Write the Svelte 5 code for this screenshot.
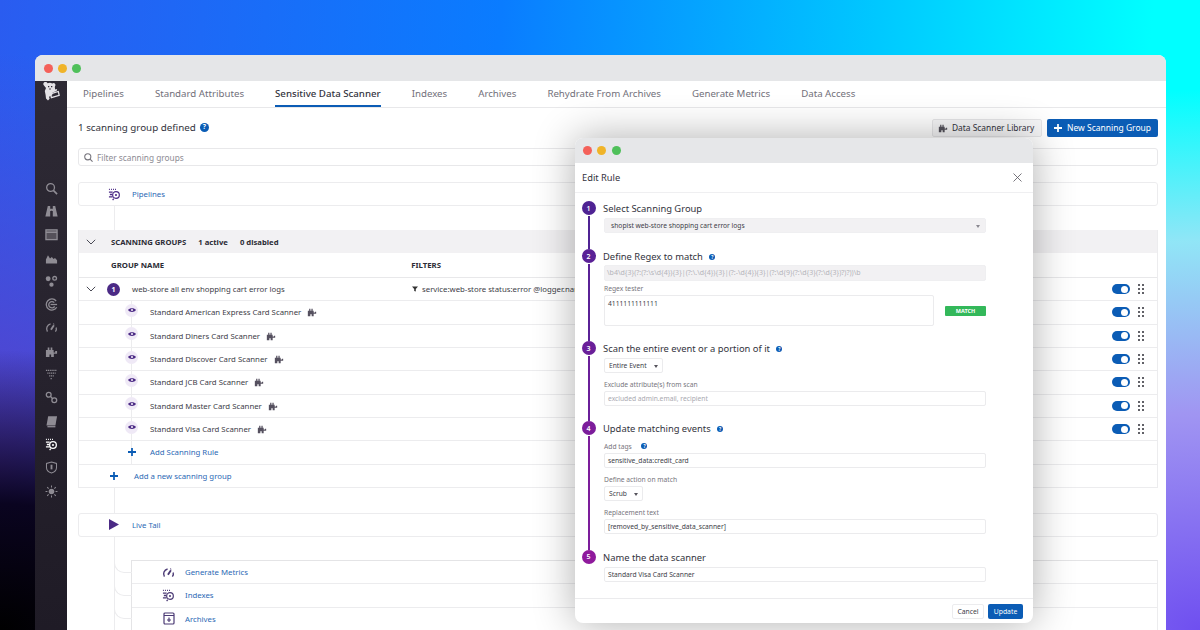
<script>
  const tabs = ['Pipelines','Standard Attributes','Sensitive Data Scanner','Indexes','Archives','Rehydrate From Archives','Generate Metrics','Data Access'];
  const rules = ['Standard American Express Card Scanner','Standard Diners Card Scanner','Standard Discover Card Scanner','Standard JCB Card Scanner','Standard Master Card Scanner','Standard Visa Card Scanner'];
  const side = ['search','binoc','cal','chart','dots','target','gauge','puzzle','filter','link','book','scan','shield','sun'];
</script>

{#snippet puzzle(size, color)}
  <svg width={size} height={size} viewBox="0 0 12 12" fill={color}><path d="M1 11V4.500h1.600V2h1.500v2.500h1.200V2h1.500v2.500H8v2.200h1.600V5.600H11v2.500H8V11H5.600V8.600H4V11z"/></svg>
{/snippet}
{#snippet scan(size, color)}
  <svg width={size} height={size} viewBox="0 0 14 14" fill="none" stroke={color} stroke-width="1.300"><path d="M1 1.500h1M3.200 1.500h1M5.400 1.500h1M7.600 1.500h1M1 4.500h4M2 7h2.400M1 9.500h4" stroke-width="1.400"/><circle cx="8.600" cy="7.600" r="3.600"/><circle cx="8.600" cy="7.600" r="1.100" fill={color} stroke="none"/><path d="M6.200 11.500l-1.200 1.600"/></svg>
{/snippet}
{#snippet gauge(size, color)}
  <svg width={size} height={size} viewBox="0 0 14 14" fill="none" stroke={color} stroke-width="1.500"><path d="M2.600 11.500A5.500 5.500 0 0 1 6 3.200M9 3.400l.9-.4M12 7a5 5 0 0 1-.8 4.500"/><path d="M6.400 9.400L9.600 4.600" stroke-width="2"/></svg>
{/snippet}
{#snippet sideIcon(n)}
  <svg width="13" height="13" viewBox="0 0 14 14" fill="none" stroke="#8f8c94" stroke-width="1.400">
    {#if n==='search'}<circle cx="6" cy="6" r="4.200"/><path d="M9 9l4 4" stroke-width="1.800"/>
    {:else if n==='binoc'}<path fill="#8f8c94" stroke="none" d="M3 1h2.600v3h2.800V1H11l2.600 11.500H8.400V6.500H7.500v-.2h-1v.2h-.9v6H.4z"/>
    {:else if n==='cal'}<rect x="1" y="2" width="12" height="10.500" fill="#55515a" stroke="#8f8c94"/><path d="M1 4.600h12"/>
    {:else if n==='chart'}<path fill="#8f8c94" stroke="none" d="M1 12.500V8l2.200-4.500L5.400 7l2-1.500 1.800 2 1.600-1L13 9v3.500z"/>
    {:else if n==='dots'}<circle cx="3.400" cy="4" r="2.600" fill="#8f8c94" stroke="none"/><circle cx="10.400" cy="3.600" r="2" /><circle cx="7" cy="10.400" r="2.300" fill="#8f8c94" stroke="none"/>
    {:else if n==='target'}<path d="M12 3.200A6 6 0 1 0 12.600 10M10 5A3.400 3.400 0 1 0 10.400 9"/><path d="M6 7h7"/>
    {:else if n==='gauge'}<path d="M2.600 11.500A5.500 5.500 0 0 1 6 3.200M9 3.400l.9-.4M12 7a5 5 0 0 1-.8 4.500"/><path d="M6.400 9.400L9.600 4.600" stroke-width="2"/>
    {:else if n==='puzzle'}<path fill="#8f8c94" stroke="none" d="M1 13V5.300h1.900V2.800h1.800v2.500h1.400V2.800h1.800v2.500h1.400V8h1.700V6.500H13v3H9.500V13H6.600v-2.800H4.800V13z"/>
    {:else if n==='filter'}<path stroke-dasharray="1.300 .7" d="M1 2.500h12M2.500 5.500h9M4.500 8.500h5M6 11.500h2"/>
    {:else if n==='link'}<circle cx="4" cy="4" r="2.600"/><circle cx="10" cy="10" r="2.600"/><path d="M6 6l2 2"/>
    {:else if n==='book'}<path fill="#8f8c94" stroke="none" d="M3.400 1.400H13l-1.800 10H1.600z"/><path d="M2.600 12.600h8.600" />
    {:else if n==='scan'}<path stroke="#fff" d="M1 1.500h1M3.200 1.500h1M5.400 1.500h1M7.600 1.500h1M1 4.500h4M2 7h2.400M1 9.500h4"/><circle stroke="#fff" cx="8.600" cy="7.600" r="3.600"/><circle cx="8.600" cy="7.600" r="1.100" fill="#fff" stroke="none"/><path stroke="#fff" d="M6.200 11.500l-1.200 1.600"/>
    {:else if n==='shield'}<path stroke-width="1.100" d="M7 1l5.400 1.600V7c0 3-2.400 5-5.400 6C4 12 1.600 10 1.600 7V2.600z"/><path d="M7 4v5" stroke-width="2"/>
    {:else}<circle cx="7" cy="7" r="3" fill="#8f8c94" stroke="none"/><path stroke-width="1.100" d="M7 .6v2M7 11.400v2M.6 7h2M11.400 7h2M2.400 2.400l1.500 1.500M10.100 10.100l1.500 1.500M11.600 2.400l-1.500 1.500M3.900 10.100l-1.500 1.500"/>{/if}
  </svg>
{/snippet}
{#snippet help(size)}
  <span class="help" style="--s:{size}px">?</span>
{/snippet}
{#snippet plus(size)}
  <svg width={size} height={size} viewBox="0 0 10 10" fill="#0b5cb5"><path d="M3.900 0h2.200v3.900H10v2.200H6.100V10H3.900V6.100H0V3.900h3.900z"/></svg>
{/snippet}
{#snippet chev()}
  <svg width="10" height="6" viewBox="0 0 10 6" fill="none" stroke="#4a4a55" stroke-width="1"><path d="M.8.8L5 5l4.200-4.200"/></svg>
{/snippet}
{#snippet toggle()}
  <span class="toggle"><i></i></span>
  <svg class="grip" width="6" height="10" viewBox="0 0 6 10" fill="#2c2c35"><circle cx="1" cy="1" r="1"/><circle cx="5" cy="1" r="1"/><circle cx="1" cy="5" r="1"/><circle cx="5" cy="5" r="1"/><circle cx="1" cy="9" r="1"/><circle cx="5" cy="9" r="1"/></svg>
{/snippet}

<div class="page">
  <div class="window">
    <div class="chrome">
      <i class="dot red"></i><i class="dot yellow"></i><i class="dot green"></i>
    </div>
    <div class="shell">
      <nav class="sidebar">
        <svg class="logo" width="17" height="19" viewBox="0 0 17 19"><path fill="#e4e2e6" d="M2.500 0a2 2 0 0 1 2 1.200L7 .8l2.500.6A2 2 0 0 1 12.500 3l-.7 2 .4 2.400 2-.4-.6 2-4 1.600-.4 2.600-3.200 1.600.6 2L5 18.500 3 16.500l-.4-3.500L1.800 9 3 6 1 3.500A2 2 0 0 1 2.500 0z"/><path fill="none" stroke="#e4e2e6" stroke-width="1.300" d="M7.500 11.800l7.800-2.300.9 3.800-7.800 2.300z"/><path fill="#2c2733" d="M5 4h1.300v1.300H5zM8 4h1.300v1.300H8zM6.200 6.500h1.600v1H6.200z"/></svg>
        <div class="side-icons">
          {#each side as n}
            <span class="side-item">{@render sideIcon(n)}</span>
          {/each}
        </div>
      </nav>
      <main class="main">
        <div class="tabs">
          {#each tabs as t, i}
            <span class="tab" class:active={i===2}>{t}</span>
          {/each}
        </div>
        <div class="content">
          <div class="head">
            <span class="count">1 scanning group defined</span>
            {@render help(9)}
            <span class="spacer"></span>
            <button class="btn-lib">{@render puzzle(10,'#55535c')}Data Scanner Library</button>
            <button class="btn-new"><svg width="8" height="8" viewBox="0 0 10 10" fill="#fff"><path d="M3.900 0h2.200v3.900H10v2.200H6.100V10H3.900V6.100H0V3.900h3.900z"/></svg>New Scanning Group</button>
          </div>
          <div class="filter">
            <svg width="9" height="9" viewBox="0 0 10 10" fill="none" stroke="#77757d" stroke-width="1.200"><circle cx="4.200" cy="4.200" r="3.400"/><path d="M6.700 6.700L9.500 9.500"/></svg>
            Filter scanning groups
          </div>
          <div class="node">
            <span class="node-icon">{@render scan(13,'#4b2a85')}</span>
            <span class="link-text">Pipelines</span>
          </div>
          <div class="wire h24"></div>
          <section class="groups">
            <div class="g-bar">
              <span class="g-chev">{@render chev()}</span>
              <b class="g-title">SCANNING GROUPS</b>
              <b class="g-stat">1 active</b>
              <b class="g-stat">0 disabled</b>
            </div>
            <div class="g-cols">
              <b>GROUP NAME</b><b class="col-filter">FILTERS</b>
            </div>
            <div class="row">
              <span class="g-chev">{@render chev()}</span>
              <span class="num">1</span>
              <span class="g-name">web-store all env shopping cart error logs</span>
              <span class="filter-val"><svg width="6" height="6" viewBox="0 0 6 6" fill="#333"><path d="M0 .5h6L3.800 3v2.500L2.200 5V3z"/></svg>service:web-store status:error @logger.name:shopist</span>
              <span class="spacer"></span>
              {@render toggle()}
            </div>
            {#each rules as r}
              <div class="row rule">
                <span class="eye"><svg width="8" height="6" viewBox="0 0 8 6" fill="#4b2a85"><path d="M0 3C1.500.5 6.500.5 8 3 6.500 5.500 1.500 5.500 0 3z"/><circle cx="4" cy="3" r="1.100" fill="#efe9f6"/></svg></span>
                <span class="r-name">{r}</span>
                {@render puzzle(10,'#55505f')}
                <span class="spacer"></span>
                {@render toggle()}
              </div>
            {/each}
            <div class="row rule">
              <span class="eye plain">{@render plus(8)}</span>
              <span class="link-text">Add Scanning Rule</span>
            </div>
            <div class="row add-group">
              <span class="add-plus">{@render plus(8)}</span>
              <span class="link-text">Add a new scanning group</span>
            </div>
          </section>
          <div class="wire h25"></div>
          <div class="node">
            <span class="node-icon"><svg width="10" height="11" viewBox="0 0 10 11" fill="#4b2a85"><path d="M0 0l10 5.500L0 11z"/></svg></span>
            <span class="link-text">Live Tail</span>
          </div>
          <div class="wire h23"></div>
          <div class="sub-wrap">
            <div class="sub">
              <span class="curve c1"></span><span class="curve c2"></span><span class="curve c3"></span>
              <div class="sub-row"><span class="sub-icon">{@render gauge(13,'#4b3a75')}</span><span class="link-text">Generate Metrics</span></div>
              <div class="sub-row"><span class="sub-icon">{@render scan(13,'#4b3a75')}</span><span class="link-text">Indexes</span></div>
              <div class="sub-row"><span class="sub-icon"><svg width="12" height="13" viewBox="0 0 12 13" fill="none" stroke="#4b3a75" stroke-width="1.200"><rect x="1" y="1" width="10" height="11" rx="1"/><path d="M1 3.500h10M6 5.500v4.500M4 8h4"/></svg></span><span class="link-text">Archives</span></div>
            </div>
          </div>
        </div>
      </main>
    </div>
  </div>

  <div class="modal">
    <div class="chrome m-chrome">
      <i class="dot red"></i><i class="dot yellow"></i><i class="dot green"></i>
    </div>
    <div class="m-head">
      <span>Edit Rule</span>
      <svg width="9" height="9" viewBox="0 0 9 9" stroke="#55535c" stroke-width=".8"><path d="M.5.5l8 8M8.500.5l-8 8"/></svg>
    </div>
    <div class="m-body">
      <div class="step s1">
        <div class="rail"><span class="circle n1">1</span><span class="line l1"></span></div>
        <div class="step-main">
          <h3>Select Scanning Group</h3>
          <div class="field filled sel mt3">shopist web-store shopping cart error logs<span class="caret"></span></div>
        </div>
      </div>
      <div class="step s2">
        <div class="rail"><span class="circle n2">2</span><span class="line l2"></span></div>
        <div class="step-main">
          <h3>Define Regex to match {@render help(6)}</h3>
          <div class="field filled regex mt2">\b4\d{'{'}3{'}'}(?:(?:\s\d{'{'}4{'}'}){'{'}3{'}'}|(?:\.\d{'{'}4{'}'}){'{'}3{'}'}|(?:-\d{'{'}4{'}'}){'{'}3{'}'}|(?:\d{'{'}9{'}'}(?:\d{'{'}3{'}'}(?:\d{'{'}3{'}'})?)?))\b</div>
          <div class="lab tight">Regex tester</div>
          <div class="tester">
            <div class="area">4111111111111</div>
            <span class="match">MATCH</span>
          </div>
        </div>
      </div>
      <div class="step s3">
        <div class="rail"><span class="circle n3">3</span><span class="line l3"></span></div>
        <div class="step-main">
          <h3>Scan the entire event or a portion of it {@render help(6)}</h3>
          <div class="drop w59 mt3">Entire Event<span class="caret dark"></span></div>
          <div class="lab">Exclude attribute(s) from scan</div>
          <div class="field ph">excluded admin.email, recipient</div>
        </div>
      </div>
      <div class="step s4">
        <div class="rail"><span class="circle n4">4</span><span class="line l4"></span></div>
        <div class="step-main">
          <h3>Update matching events {@render help(6)}</h3>
          <div class="lab">Add tags <span class="lab-help">{@render help(6)}</span></div>
          <div class="field">sensitive_data:credit_card</div>
          <div class="lab">Define action on match</div>
          <div class="drop w39">Scrub<span class="caret dark"></span></div>
          <div class="lab">Replacement text</div>
          <div class="field">[removed_by_sensitive_data_scanner]</div>
        </div>
      </div>
      <div class="step s5">
        <div class="rail"><span class="circle n5">5</span></div>
        <div class="step-main">
          <h3>Name the data scanner</h3>
          <div class="field mt3">Standard Visa Card Scanner</div>
        </div>
      </div>
    </div>
    <div class="m-foot">
      <button class="cancel">Cancel</button>
      <button class="update">Update</button>
    </div>
  </div>
</div>

<style>
  :global(body) { margin: 0; }
  .page {
    position: relative;
    width: 1200px;
    height: 630px;
    overflow: hidden;
    box-sizing: border-box;
    padding: 55px 34px 0 35px;
    font-family: "Noto Sans", sans-serif;
    color: #33333d;
    background:
      radial-gradient(ellipse 420px 280px at 0 100%, #000 0%, #0a0420 45%, rgba(10,4,32,0) 100%),
      radial-gradient(ellipse 760px 540px at 100% 100%, #6f4ff0 0%, #a095f2 40%, rgba(170,225,245,.85) 72%, rgba(170,235,245,0) 100%),
      radial-gradient(ellipse 300px 420px at 0 75%, #5a3fc8 0%, rgba(90,63,200,0) 100%),
      linear-gradient(95deg, #2a5cf0 0%, #0a7cff 40%, #00c8ff 70%, #00ffff 92%);
  }
  .window {
    height: 100%;
    border-radius: 8px 8px 0 0;
    overflow: hidden;
    background: #fff;
    display: flex;
    flex-direction: column;
  }
  .chrome {
    height: 26px;
    flex: none;
    background: #e5e6e8;
    display: flex;
    align-items: center;
    gap: 5.3px;
    padding-left: 8.5px;
  }
  .dot { width: 9px; height: 9px; border-radius: 50%; display: block; }
  .red { background: #f4615a; }
  .yellow { background: #f0b429; }
  .green { background: #4fc05a; }
  .shell { flex: 1; display: flex; min-height: 0; }
  .sidebar {
    width: 32px;
    flex: none;
    background: linear-gradient(#2e2a35, #1f1b26);
    display: flex;
    flex-direction: column;
    align-items: center;
  }
  .logo { margin-top: 1px; }
  .side-icons { margin-top: 75.5px; display: flex; flex-direction: column; }
  .side-item { height: 23.3px; display: flex; align-items: center; justify-content: center; }
  .main { flex: 1; min-width: 0; display: flex; flex-direction: column; }
  .tabs {
    height: 26px;
    flex: none;
    border-bottom: 1px solid #e8e8ea;
    display: flex;
    gap: 31px;
    padding-left: 16px;
  }
  .tab {
    font-size: 9.7px;
    line-height: 26px;
    color: #72707a;
    white-space: nowrap;
  }
  .tab.active {
    color: #33333d;
    font-weight: 500;
    box-shadow: inset 0 -2px 0 #0b5cb5;
  }
  .content { padding: 0 8px 0 11px; flex: 1; min-height: 0; }
  .head { height: 39px; margin-bottom: 1px; display: flex; align-items: center; gap: 5px; }
  .head .help { margin-left: -1px; }
  .count { font-size: 9.8px; color: #33333d; }
  .spacer { flex: 1; }
  .help {
    display: inline-flex;
    align-items: center;
    justify-content: center;
    width: var(--s);
    height: var(--s);
    border-radius: 50%;
    background: #0b5cb5;
    color: #fff;
    font-size: calc(var(--s) * .75);
    font-weight: 700;
    line-height: 1;
    vertical-align: 1px;
    margin-left: 2px;
  }
  button { font-family: inherit; margin: 0; cursor: pointer; }
  .btn-lib {
    height: 18px;
    width: 110px;
    border: 1px solid #e6e6e8;
    background: #f6f6f7;
    border-radius: 2px;
    font-size: 8.4px;
    color: #33333d;
    display: flex;
    align-items: center;
    gap: 4px;
    padding: 0 0 0 5px;
    white-space: nowrap;
  }
  .btn-new {
    height: 18px;
    width: 111px;
    border: 0;
    background: #0b5cb5;
    border-radius: 2px;
    font-size: 8.5px;
    color: #fff;
    display: flex;
    align-items: center;
    gap: 5px;
    padding: 0 0 0 7px;
    white-space: nowrap;
  }
  .filter {
    height: 18px;
    border: 1px solid #e8e8ea;
    border-radius: 3px;
    box-sizing: border-box;
    display: flex;
    align-items: center;
    gap: 4px;
    padding-left: 5px;
    font-size: 8.3px;
    color: #8d8b93;
    margin-bottom: 16px;
  }
  .node {
    height: 24px;
    box-sizing: border-box;
    border: 1px solid #ececee;
    border-radius: 3px;
    display: flex;
    align-items: center;
  }
  .node-icon { width: 42px; display: flex; justify-content: center; margin-left: 14px; margin-right: -3px; flex: none; }
  .link-text { color: #2b69b5; font-size: 7.8px; white-space: nowrap; }
  .wire { margin-left: 36px; width: 1px; background: #ececee; }
  .h24 { height: 24px; }
  .h25 { height: 25px; }
  .h23 { height: 23px; }
  .groups { border: 1px solid #ececee; border-top: 0; border-bottom: 0; }
  .g-bar {
    height: 23px;
    background: #f2f1f3;
    display: flex;
    align-items: center;
    font-size: 7.7px;
    color: #2c2c35;
  }
  .g-chev { width: 10px; margin-left: 7px; display: flex; flex: none; }
  .g-title { margin-left: 15px; margin-right: 12px; }
  .g-stat { margin-right: 12px; }
  .g-cols {
    height: 25px;
    border-bottom: 1px solid #e8e8ea;
    box-sizing: border-box;
    display: flex;
    align-items: center;
    font-size: 7.8px;
    color: #2c2c35;
    padding-left: 32px;
  }
  .col-filter { margin-left: 247px; }
  .row {
    height: 23.33px;
    box-sizing: border-box;
    border-bottom: 1px solid #ececee;
    display: flex;
    align-items: center;
    font-size: 7.8px;
    color: #3d3d47;
    padding-right: 13px;
    white-space: nowrap;
  }
  .num {
    width: 13px;
    height: 13px;
    border-radius: 50%;
    background: #4b2a85;
    color: #fff;
    font-size: 7px;
    font-weight: 700;
    display: flex;
    align-items: center;
    justify-content: center;
    margin-left: 11px;
    flex: none;
  }
  .g-name { margin-left: 12px; width: 280px; flex: none; }
  .filter-val { display: flex; align-items: center; gap: 4px; overflow: hidden; width: 400px; }
  .rule { padding-left: 46px; position: relative; }
  .eye {
    width: 13px;
    height: 13px;
    border-radius: 50%;
    background: #efe9f6;
    display: flex;
    align-items: center;
    justify-content: center;
    margin-right: 12px;
    margin-top: -4px;
    flex: none;
    position: relative;
    z-index: 1;
  }
  .eye.plain { background: none; margin-top: 0; }
  .rule::before {
    content: "";
    position: absolute;
    left: 52px;
    top: 0;
    bottom: 0;
    width: 1px;
    background: #ececee;
  }
  .r-name { margin-right: 6px; }
  .add-group { padding-left: 31px; }
  .add-plus { width: 8px; margin-right: 16px; display: flex; flex: none; }
  .toggle {
    width: 17.5px;
    height: 10px;
    border-radius: 5px;
    background: #0b5cb5;
    display: block;
    position: relative;
    flex: none;
    margin-right: 8.5px;
  }
  .toggle i {
    position: absolute;
    right: 1.5px;
    top: 1.5px;
    width: 7px;
    height: 7px;
    border-radius: 50%;
    background: #fff;
  }
  .grip { flex: none; }
  .sub-wrap { padding-left: 53px; }
  .sub {
    position: relative;
    border: 1px solid #e4e4e6;
    border-bottom: 0;
    border-right-color: #ececee;
  }
  .sub::before {
    content: "";
    position: absolute;
    left: -18px;
    top: -1px;
    bottom: 0;
    width: 1px;
    background: #ececee;
  }
  .sub-row {
    height: 23.33px;
    box-sizing: border-box;
    border-bottom: 1px solid #ececee;
    display: flex;
    align-items: center;
  }
  .sub-icon { width: 13px; margin-left: 30px; margin-right: 10px; display: flex; justify-content: center; flex: none; }
  .curve {
    position: absolute;
    left: -18px;
    width: 18px;
    height: 12px;
    border-left: 1px solid #ececee;
    border-bottom: 1px solid #ececee;
    border-bottom-left-radius: 10px;
    box-sizing: border-box;
  }
  .c1 { top: 0; }
  .c2 { top: 23px; }
  .c3 { top: 46px; }

  .modal {
    position: absolute;
    left: 575px;
    top: 138px;
    width: 458px;
    height: 485px;
    background: #fff;
    border-radius: 8px;
    overflow: hidden;
    box-shadow: 0 0 42px rgba(0,0,0,.32);
    display: flex;
    flex-direction: column;
  }
  .m-chrome { height: 25px; padding-left: 8px; background: #e6e7e9; }
  .m-head {
    height: 30px;
    flex: none;
    box-sizing: border-box;
    border-bottom: 1px solid #efeff1;
    display: flex;
    align-items: center;
    justify-content: space-between;
    padding: 0 11px 0 7px;
    font-size: 9.3px;
    color: #33333d;
  }
  .m-body { height: 405px; flex: none; padding: 8px 47px 0 6.5px; box-sizing: border-box; }
  .step { display: flex; }
  .s1 { height: 48px; }
  .s2 { height: 92px; }
  .s3 { height: 80px; }
  .s4 { height: 128.5px; }
  .s5 { height: 48px; }
  .rail { width: 14px; flex: none; display: flex; flex-direction: column; align-items: center; }
  .circle {
    width: 14px;
    height: 14px;
    flex: none;
    border-radius: 50%;
    color: #fff;
    font-size: 7px;
    font-weight: 600;
    display: flex;
    align-items: center;
    justify-content: center;
  }
  .line { width: 2px; flex: 1; margin: 1px 0 0; }
  .n1, .l1 { background: #4f2393; }
  .n2, .l2 { background: #5a2196; }
  .n3, .l3 { background: #6a1f99; }
  .n4, .l4 { background: #7c1d9b; }
  .n5 { background: #8f1a9c; }
  .step-main { margin-left: 7.5px; flex: 1; min-width: 0; }
  h3 {
    margin: 0;
    height: 14px;
    font-size: 9.4px;
    line-height: 15px;
    font-weight: 400;
    color: #33333d;
    white-space: nowrap;
  }
  h3 .help { margin-left: 4px; }
  .field {
    height: 15px;
    box-sizing: border-box;
    margin-left: 1px;
    border: 1px solid #ebebed;
    border-radius: 2px;
    font-size: 6.7px;
    line-height: 13px;
    padding-left: 3px;
    color: #3d3d47;
    white-space: nowrap;
    overflow: hidden;
    position: relative;
  }
  .filled { background: #f2f1f3; border-color: #efeff1; }
  .sel { padding-left: 6px; }
  .mt3 { margin-top: 3px; }
  .mt2 { margin-top: 2px; }
  .regex { height: 16px; font-size: 7px; line-height: 14px; color: #b4b4ba; padding-left: 2px; }
  .caret {
    position: absolute;
    right: 5px;
    top: 5.5px;
    border: 2.5px solid transparent;
    border-top: 3px solid #8a8890;
    border-bottom: 0;
  }
  .caret.dark { border-top-color: #55535c; top: 6px; right: 4px; }
  .lab {
    height: 18px;
    margin-left: 1px;
    padding-top: 5.5px;
    box-sizing: border-box;
    font-size: 6.7px;
    line-height: 11px;
    color: #77757d;
  }
  .lab.tight { height: 14px; padding-top: 1.5px; }
  .lab-help { margin-left: 6px; }
  .tester { display: flex; align-items: center; margin-left: 1px; }
  .area {
    width: 330px;
    height: 31px;
    box-sizing: border-box;
    border: 1px solid #ebebed;
    border-radius: 2px;
    font-size: 6.7px;
    line-height: 12px;
    padding: 2px 3px;
    color: #3d3d47;
    flex: none;
  }
  .match {
    margin-left: 11px;
    width: 41px;
    height: 10px;
    background: #33b85a;
    color: #fff;
    font-size: 5.5px;
    font-weight: 700;
    line-height: 10px;
    text-align: center;
    border-radius: 1px;
    flex: none;
  }
  .drop {
    height: 15px;
    box-sizing: border-box;
    margin-left: 1px;
    border: 1px solid #ebebed;
    border-radius: 2px;
    font-size: 6.7px;
    line-height: 13px;
    padding-left: 4px;
    color: #3d3d47;
    position: relative;
    white-space: nowrap;
  }
  .w59 { width: 59px; }
  .w39 { width: 39px; }
  .ph { color: #a9a9b0; }
  .m-foot {
    height: 25px;
    flex: none;
    box-sizing: border-box;
    border-top: 1px solid #ebebed;
    display: flex;
    justify-content: flex-end;
    align-items: center;
    gap: 4px;
    padding-right: 10px;
  }
  .cancel {
    width: 32px;
    height: 15px;
    padding: 0;
    background: #fff;
    border: 1px solid #ececee;
    border-radius: 2px;
    font-size: 6.8px;
    color: #3d3d47;
  }
  .update {
    width: 35px;
    height: 15px;
    padding: 0;
    background: #0b5cb5;
    border: 0;
    border-radius: 2px;
    font-size: 6.8px;
    color: #fff;
  }
</style>
